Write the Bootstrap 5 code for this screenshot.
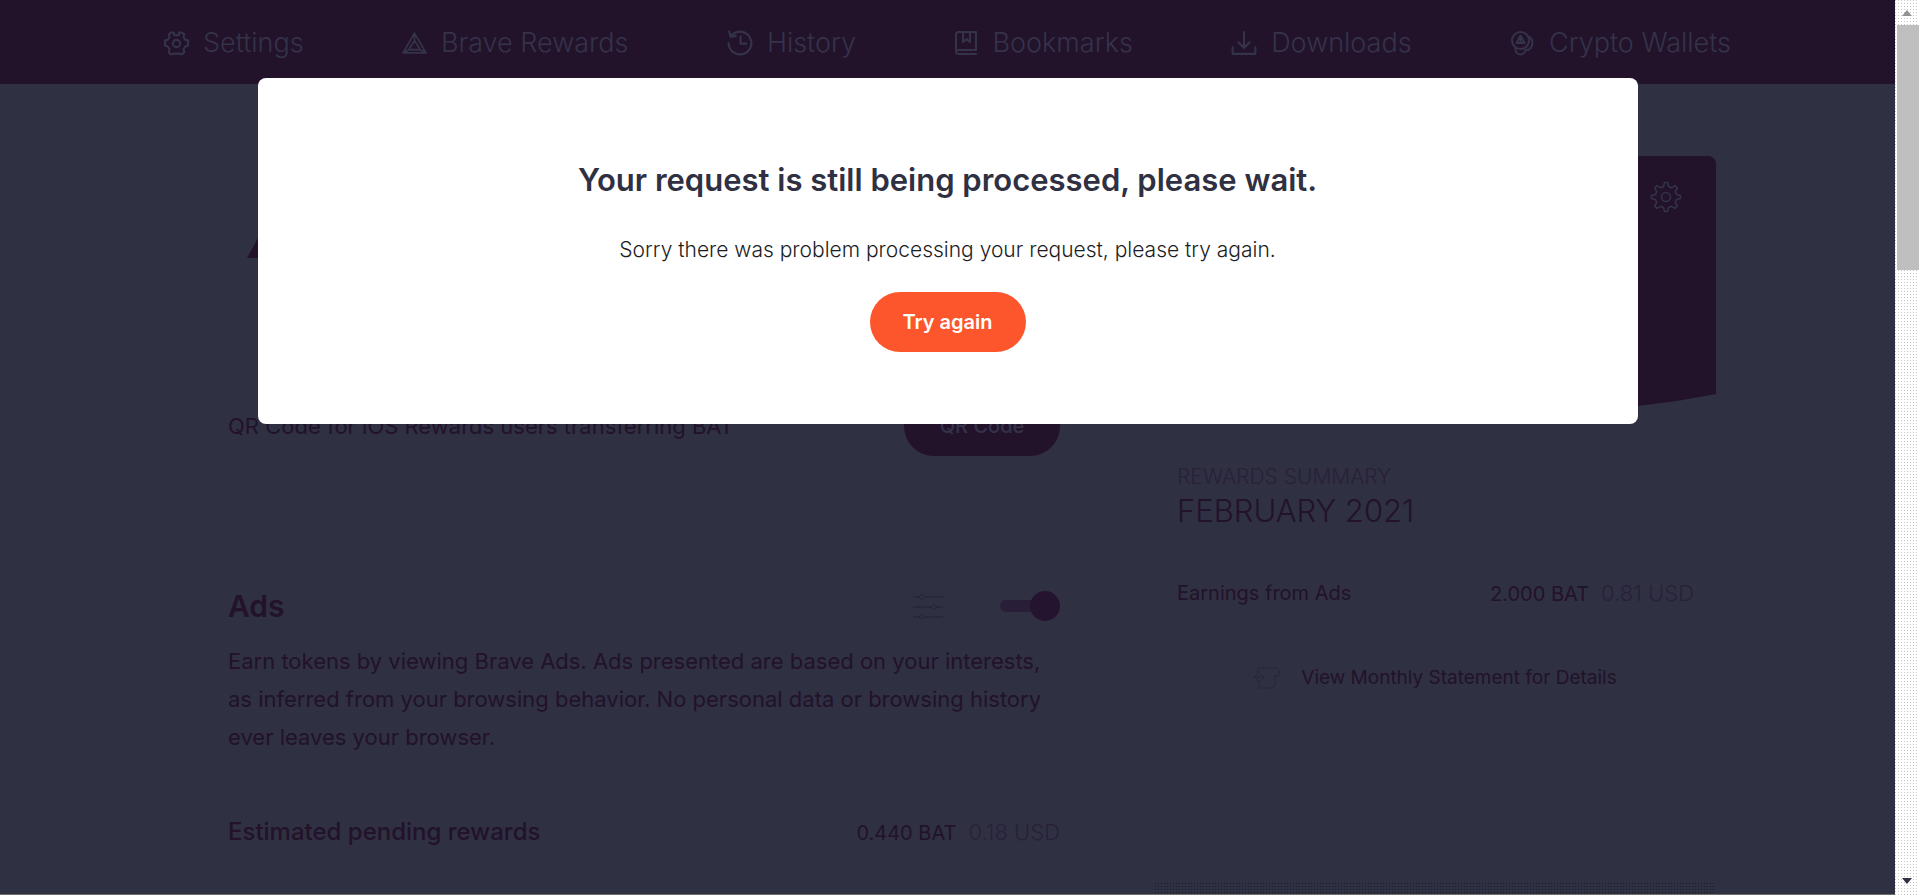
<!DOCTYPE html>
<html lang="en">
<head>
<meta charset="utf-8">
<meta name="viewport" content="width=device-width, initial-scale=1">
<title>Brave Rewards</title>
<link href="https://cdn.jsdelivr.net/npm/bootstrap@5.3.0/dist/css/bootstrap.min.css" rel="stylesheet">
<style>
  :root { --ink: #22122a; --slate: #2f3042; --faint: #29203a; --nav-ink: #34334a; --orange: #fd562c; }
  body { font-family: Inter, "Liberation Sans", sans-serif; background: var(--slate); color: var(--ink); height: 100vh; overflow: hidden; }
  svg { display: block; flex: none; }
  a { color: inherit; text-decoration: none; }
  .line-icon { fill: none; stroke: currentColor; stroke-width: 2; stroke-linejoin: round; stroke-linecap: round; }
  .page-area { min-width: 0; border-bottom: 1px solid #6d6e6b; }
  .top-bar { background: var(--ink); color: var(--nav-ink); height: 84px; padding: 2px 164px 0; font-size: 27px; font-weight: 300; }
  .top-bar a { gap: 14px; white-space: nowrap; }
  .board { display: grid; grid-template-columns: 929fr 561fr; gap: 47px; max-width: 1537px; margin: 0 auto; padding-top: 72px; }
  .main-col { padding: 62px 48px 0 49px; font-size: 22px; line-height: 38px; }
  .bat-logo { margin: 0 0 138px 19px; }
  .btn-pill { border-radius: 30px; width: 156px; height: 60px; border: 0; font-size: 20px; font-weight: 600; }
  .btn-qr, .btn-qr:hover { background: var(--ink); color: var(--nav-ink); font-weight: 500; }
  .btn-try, .btn-try:hover { background: var(--orange); color: #fff; }
  .ads-head { margin-top: 130px; height: 40px; }
  .ads-head h2 { font-size: 30px; font-weight: 600; }
  .icon-btn { background: none; border: 0; padding: 0; color: inherit; }
  .tuner { color: #232436; margin-right: 57px; }
  .switch-input { appearance: none; width: 60px; height: 30px; margin: 0; position: relative; }
  .switch-input::before { content: ""; position: absolute; left: 0; top: 9px; width: 48px; height: 12px; border-radius: 6px; background: #291e37; }
  .switch-input::after { content: ""; position: absolute; right: 0; top: 0; width: 30px; height: 30px; border-radius: 50%; background: #25142f; }
  .ads-text { margin: 16px 0 57px; }
  .pending { font-size: 24px; font-weight: 500; }
  .amount { font-size: 20px; }
  .usd { color: var(--faint); font-size: 22px; font-weight: 300; margin-left: 12px; }
  .wallet-head { background: var(--ink); color: var(--nav-ink); height: 260px; border-radius: 8px 8px 0 0; padding: 25px 34px; clip-path: polygon(0 0, 100% 0, 100% 238px, 93% 245px, 86% 250px, 60% 260px, 0 260px); }
  .summary { padding: 47px 22px 0; font-size: 20px; line-height: 28px; }
  .summary-label { font-size: 21px; font-weight: 300; color: var(--faint); }
  .summary-month { font-size: 31px; font-weight: 300; line-height: 40px; margin-bottom: 48px; }
  .statement { font-size: 19px; margin-top: 56px; gap: 21px; }
  .statement svg { color: #262739; }
  .next-card { margin-top: 191px; height: 40px; background: conic-gradient(at 1px 1px, transparent 75%, #191a28 0) 0 0 / 3px 3px; }
  .notice-layer { position: absolute; inset: 78px 0 auto 0; z-index: 5; }
  .notice { background: #fff; border-radius: 8px; max-width: 1380px; margin: 0 auto; padding: 82px 40px 72px; color: #2f3042; }
  .notice h1 { font-size: 31px; font-weight: 600; line-height: 40px; margin-bottom: 36px; }
  .notice p { font-size: 21px; font-weight: 300; line-height: 28px; margin-bottom: 28px; color: #1c1d24; }
  .rail { width: 24px; padding-left: 2px; background: conic-gradient(at 1px 1px, transparent 75%, #c6c6c6 0) 0 0 / 3px 3px #fff; }
  .rail-thumb { height: 245px; background: #bfbfbf; }
  .rail-arrow { height: 25px; width: 20px; }
</style>
</head>
<body class="d-flex">
<div class="page-area position-relative flex-grow-1 overflow-hidden">
  <nav class="top-bar d-flex justify-content-between align-items-center">
    <a href="#" class="d-flex align-items-center"><svg class="line-icon" width="25" height="25" viewBox="0 0 24 24"><path d="M9.800 4 9.500 1.500H7L4.500 3l.8 2.800L3.500 8.500 1 9v5l2.500.8 1.800 2.700L4.500 20.500 7 22.500l2.500-.8h5l2.500.8 2.500-2-.8-3 1.800-2.700L23 14V9l-2.500-.5-1.800-2.700.8-2.800L17 1.500h-2.500L14.200 4z"/><circle cx="12" cy="12" r="3.500"/></svg>Settings</a>
    <a href="#" class="d-flex align-items-center"><svg class="line-icon" width="25" height="25" viewBox="0 0 24 24"><path d="M12 2 23 21H1zM12 9l5.500 9h-11zM12 2v7M1 21l5.500-3M23 21l-5.500-3" stroke-width="1.700"/></svg>Brave Rewards</a>
    <a href="#" class="d-flex align-items-center"><svg class="line-icon" width="26" height="26" viewBox="0 0 24 24"><path d="M1.500 12A10.500 10.500 0 1 0 5 4.200M12.500 6v6.500H18M2 1.500l1.500 4.800 4.500-.8"/></svg>History</a>
    <a href="#" class="d-flex align-items-center"><svg class="line-icon" width="24" height="26" viewBox="0 0 24 26"><path d="M22 20V2H4.500Q2 2 2 4.500v17Q2 24 4.500 24H22M22 20H4.500Q2 20 2 22M9 2v10l3.500-3 3.500 3V2"/></svg>Bookmarks</a>
    <a href="#" class="d-flex align-items-center"><svg class="line-icon" width="26" height="26" viewBox="0 0 24 24"><path d="M12 2v14M7 11.500l5 5 5-5M1.500 16v6h21v-6"/></svg>Downloads</a>
    <a href="#" class="d-flex align-items-center"><svg class="line-icon" width="25" height="26" viewBox="0 0 24 26"><circle cx="10" cy="10.500" r="8.500"/><path d="M10 5.500 14 13H6zM10 9v4M18 6.500a7.500 7.500 0 0 1-2.500 14M5 18q-.5 6 5 6.500 4.500-.5 5-5"/></svg>Crypto Wallets</a>
  </nav>

  <main class="board">
    <section class="main-col">
      <svg class="bat-logo" width="44" height="40" viewBox="0 0 44 40"><path d="M22 0 44 40H0z" fill="#22122a"/></svg>
      <div class="d-flex justify-content-between align-items-center">
        <span>QR Code for iOS Rewards users transferring BAT</span>
        <button type="button" class="btn btn-pill btn-qr">QR Code</button>
      </div>
      <div class="ads-head d-flex align-items-center">
        <h2 class="mb-0 me-auto" id="ads-title">Ads</h2>
        <button type="button" class="icon-btn tuner" aria-label="Ad settings"><svg class="line-icon" width="30" height="26" viewBox="0 0 30 26"><path d="M0 4h6m6 0h18M0 14h18m6 0h6M0 24h6m6 0h18M6 4l3-3 3 3-3 2zM18 14l3-3 3 3-3 2zM6 24l3-3 3 3-3 2z" stroke-width="1"/></svg></button>
        <input type="checkbox" class="switch-input" role="switch" checked aria-labelledby="ads-title">
      </div>
      <p class="ads-text">Earn tokens by viewing Brave Ads. Ads presented are based on your interests, as inferred from your browsing behavior. No personal data or browsing history ever leaves your browser.</p>
      <div class="d-flex justify-content-between">
        <span class="pending">Estimated pending rewards</span>
        <span class="amount">0.440 BAT<span class="usd">0.18 USD</span></span>
      </div>
    </section>

    <aside>
      <div class="wallet-head d-flex justify-content-end align-items-start">
        <button type="button" class="icon-btn" aria-label="Wallet settings"><svg class="line-icon" width="32" height="32" viewBox="0 0 32 32"><circle cx="16" cy="16" r="4.500" stroke-width="1.500"/><path stroke-width="1.500" d="M13.500 5.500 14.500 1.500h3l1 4 3 1.200L25 4.600 27.400 7l-2.100 3.500 1.200 3 4 1v3l-4 1-1.200 3 2.100 3.500-2.400 2.400-3.500-2.100-3 1.200-1 4h-3l-1-4-3-1.200L7 27.400 4.600 25l2.100-3.500-1.200-3-4-1v-3l4-1 1.200-3L4.600 7 7 4.600l3.500 2.100z"/></svg></button>
      </div>
      <div class="summary">
        <div class="summary-label">REWARDS SUMMARY</div>
        <div class="summary-month">FEBRUARY 2021</div>
        <div class="d-flex justify-content-between">
          <span>Earnings from Ads</span>
          <span>2.000 BAT<span class="usd">0.81 USD</span></span>
        </div>
        <a href="#" class="statement d-flex justify-content-center align-items-center"><svg class="line-icon" width="26" height="22" viewBox="0 0 26 22"><path stroke-width="1" d="M4 6V1h19q3 1 2 8h-4M21 9v8q0 4-4 4H5V15M1 10h8M1 10l3-4M1 10l3 4M7 7l3 3-3 4"/></svg>View Monthly Statement for Details</a>
      </div>
      <div class="next-card"></div>
    </aside>
  </main>

  <div class="notice-layer">
    <div class="notice text-center" role="dialog" aria-labelledby="notice-title">
      <h1 id="notice-title">Your request is still being processed, please wait.</h1>
      <p>Sorry there was problem processing your request, please try again.</p>
      <button type="button" class="btn btn-pill btn-try">Try again</button>
    </div>
  </div>
</div>

<div class="rail d-flex flex-column" aria-hidden="true">
  <svg class="rail-arrow" viewBox="0 0 20 25"><path d="M5 16h10l-5-6z" fill="#929292"/></svg>
  <div class="rail-thumb"></div>
  <svg class="rail-arrow mt-auto" viewBox="0 0 20 25"><path d="M5 8h10l-5 6z" fill="#2f3042"/></svg>
</div>
<script src="https://cdn.jsdelivr.net/npm/bootstrap@5.3.0/dist/js/bootstrap.bundle.min.js"></script>
</body>
</html>
